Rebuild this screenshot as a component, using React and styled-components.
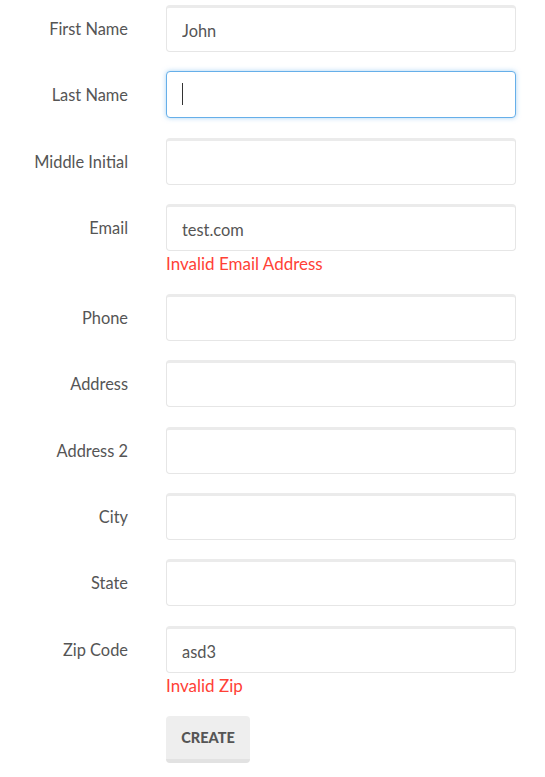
import React from 'react'
import styled, { createGlobalStyle, css } from 'styled-components'

const GlobalStyle = createGlobalStyle`
  body {
    margin: 0;
    background: #fff;
    font-family: "Lato", "Open Sans", sans-serif;
    color: #555;
  }
`;

const fields = [
  { label: 'First Name', value: 'John' },
  { label: 'Last Name', value: '', focused: true },
  { label: 'Middle Initial', value: '' },
  { label: 'Email', value: 'test.com', error: 'Invalid Email Address' },
  { label: 'Phone', value: '' },
  { label: 'Address', value: '' },
  { label: 'Address 2', value: '' },
  { label: 'City', value: '' },
  { label: 'State', value: '' },
  { label: 'Zip Code', value: 'asd3', error: 'Invalid Zip' },
];

function App() {
  return (
    <>
      <GlobalStyle />
      <Form onSubmit={e => e.preventDefault()}>
        {fields.map(f => (
          <Row key={f.label}>
            <Label>{f.label}</Label>
            <Control>
              <InputWrap>
                <Input defaultValue={f.value} $focused={f.focused} readOnly />
                {f.focused && <Caret />}
              </InputWrap>
              {f.error && <Error>{f.error}</Error>}
            </Control>
          </Row>
        ))}
        <Row>
          <span />
          <Control>
            <Button type="submit">Create</Button>
          </Control>
        </Row>
      </Form>
    </>
  )
}

export default App;

const Form = styled.form`
  padding-top: 5px;
  display: flex;
  flex-direction: column;
  gap: 19.3px;
`;

const Row = styled.div`
  display: grid;
  grid-template-columns: 128px 350px;
  column-gap: 38px;
  align-items: start;
`;

const Label = styled.label`
  height: 47px;
  line-height: 47px;
  text-align: right;
  font-size: 16.4px;
  color: #555;
  white-space: nowrap;
`;

const Control = styled.div`
  display: flex;
  flex-direction: column;
`;

const InputWrap = styled.div`
  position: relative;
`;

const Input = styled.input`
  box-sizing: border-box;
  width: 350px;
  height: 47px;
  padding: 2px 15px 0;
  font-family: inherit;
  font-size: 16.4px;
  color: #555;
  background: #fff;
  border: 1px solid #e6e6e6;
  border-top: 3px solid #ebebeb;
  border-radius: 4px;
  outline: none;

  ${p => p.$focused && css`
    border: 1px solid #66afe9;
    box-shadow: 0 0 5px rgba(102, 175, 233, 0.55);
  `}
`;

const Caret = styled.span`
  position: absolute;
  left: 16px;
  top: 12px;
  width: 1px;
  height: 22px;
  background: #333;
`;

const Error = styled.div`
  margin-top: 1px;
  line-height: 23px;
  font-size: 17px;
  color: #ff4136;
`;

const Button = styled.button`
  width: 84px;
  height: 47px;
  padding: 0;
  font-family: inherit;
  font-size: 14.5px;
  font-weight: 900;
  text-transform: uppercase;
  color: #555;
  background: #eee;
  border: none;
  border-bottom: 4px solid #e2e2e2;
  border-radius: 4px;
  cursor: pointer;
`;
